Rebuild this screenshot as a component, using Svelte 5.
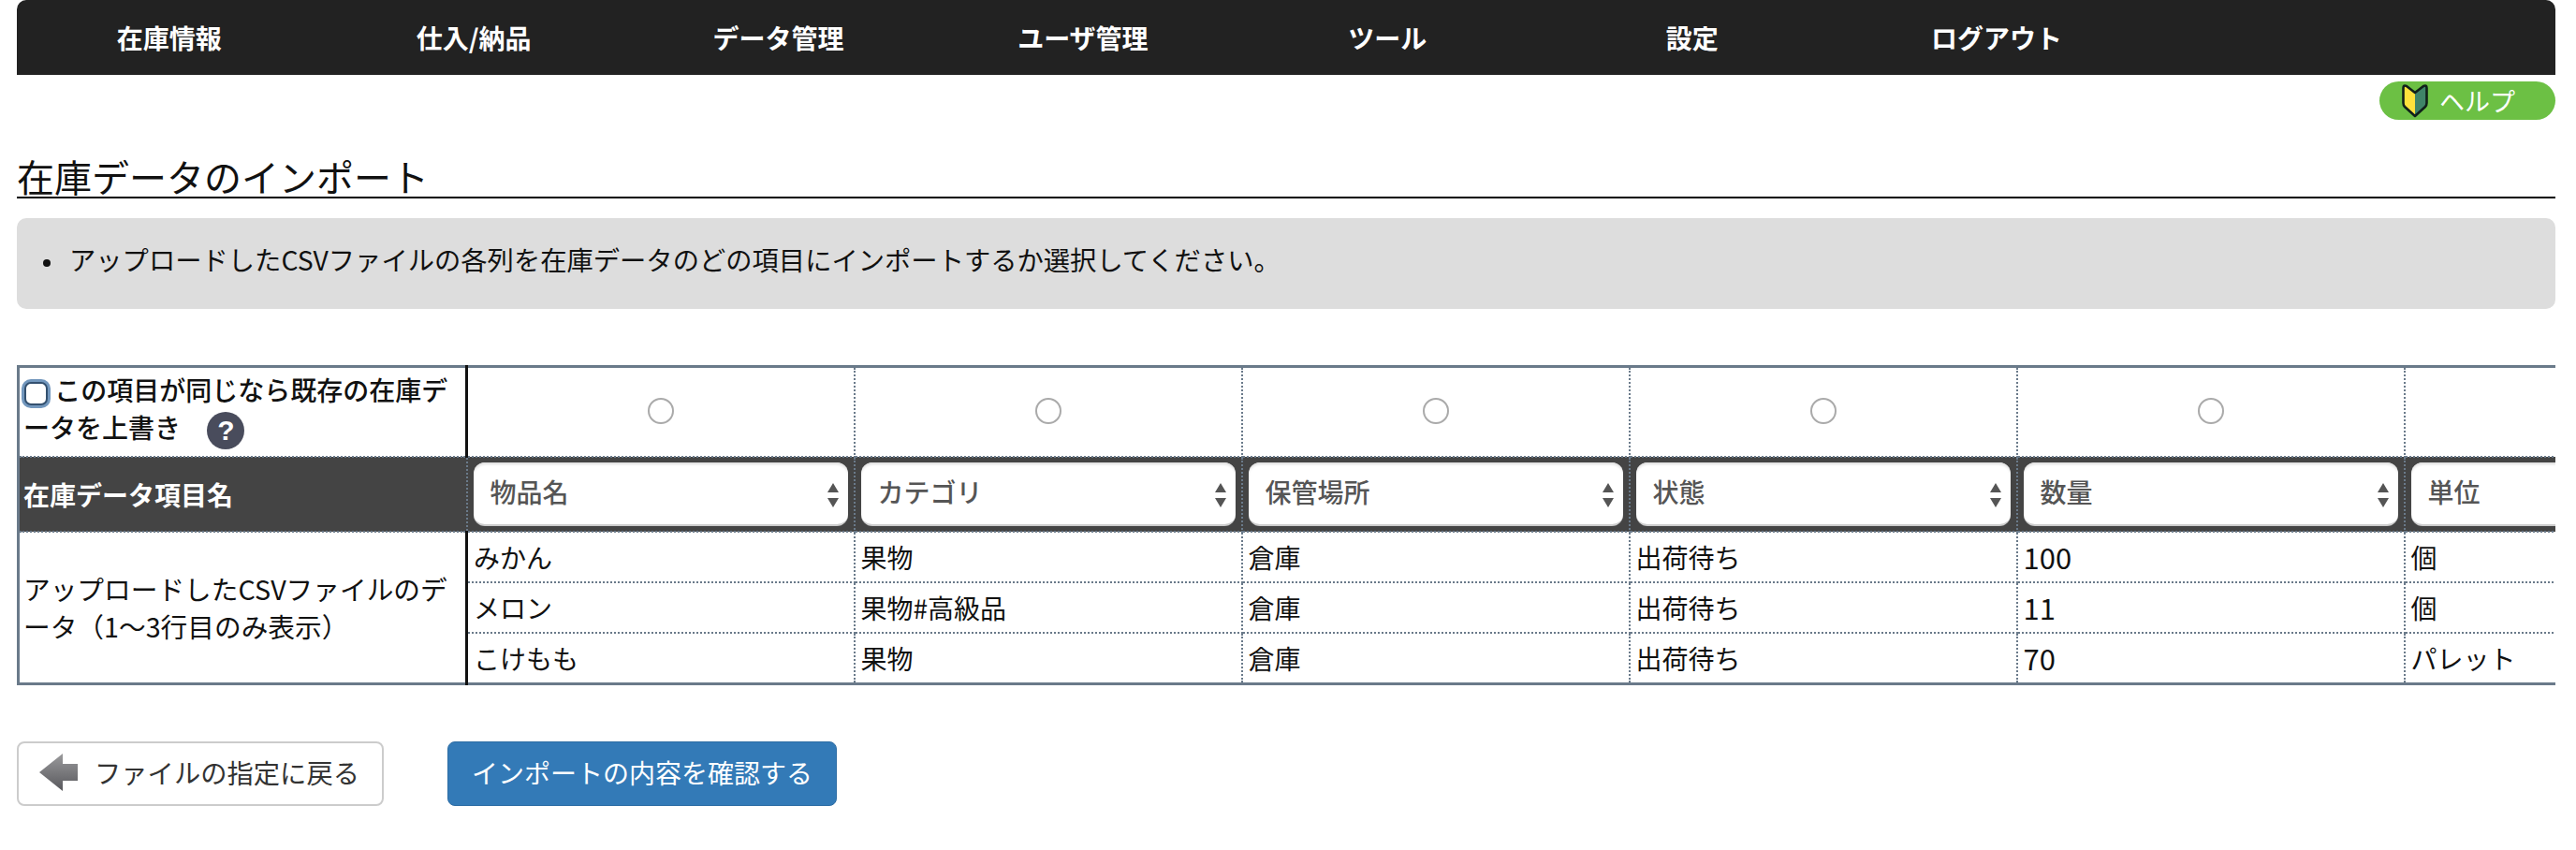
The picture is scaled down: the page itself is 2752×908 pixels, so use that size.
<script>
  const nav = ['在庫情報', '仕入/納品', 'データ管理', 'ユーザ管理', 'ツール', '設定', 'ログアウト'];
  const cols = [
    { name: '物品名', rows: ['みかん', 'メロン', 'こけもも'] },
    { name: 'カテゴリ', rows: ['果物', '果物#高級品', '果物'] },
    { name: '保管場所', rows: ['倉庫', '倉庫', '倉庫'] },
    { name: '状態', rows: ['出荷待ち', '出荷待ち', '出荷待ち'] },
    { name: '数量', rows: ['100', '11', '70'], num: true },
    { name: '単位', rows: ['個', '個', 'パレット'] }
  ];
</script>

<div class="page">
  <nav class="nav">
    {#each nav as item}
      <span class="nav-item">{item}</span>
    {/each}
  </nav>

  <div class="help-row">
    <span class="help">
      <svg class="mark" viewBox="0 0 30 37" width="30" height="37">
        <path d="M15 10 L15 35 L4 25 Q2.5 23.5 2.5 21 L2.5 5 Q2.5 1.5 6 3 Z" fill="#fde23c" />
        <path d="M15 10 L15 35 L26 25 Q27.5 23.5 27.5 21 L27.5 5 Q27.5 1.5 24 3 Z" fill="#3f8468" />
        <path d="M15 10 L6 3 Q2.5 1.5 2.5 5 L2.5 21 Q2.5 23.5 4 25 L15 35 L26 25 Q27.5 23.5 27.5 21 L27.5 5 Q27.5 1.5 24 3 Z" fill="none" stroke="#10201a" stroke-width="2.6" stroke-linejoin="round" />
      </svg>
      <span>ヘルプ</span>
    </span>
  </div>

  <h1 class="title">在庫データのインポート</h1>

  <div class="notice">
    <ul>
      <li>アップロードしたCSVファイルの各列を在庫データのどの項目にインポートするか選択してください。</li>
    </ul>
  </div>

  <div class="table-wrap">
    <table>
      <colgroup>
        <col class="col-first" />
        {#each cols as _}
          <col class="col-data" />
        {/each}
      </colgroup>
      <tbody>
        <tr class="row-key">
          <td class="first">
            <input class="check" type="checkbox" />
            この項目が同じなら既存の在庫データを上書き
            <span class="q">?</span>
          </td>
          {#each cols as c, i}
            <td class="radio-cell">
              {#if i < 5}<input class="radio" type="radio" name="key" />{/if}
            </td>
          {/each}
        </tr>
        <tr class="row-head">
          <th class="first-head">在庫データ項目名</th>
          {#each cols as c}
            <td>
              <div class="select-box">
                <select>
                  <option>{c.name}</option>
                </select>
                <svg class="updown" viewBox="0 0 14 30" width="14" height="30">
                  <path d="M7 2 L13 12 L1 12 Z M7 28 L13 18 L1 18 Z" fill="#555" />
                </svg>
              </div>
            </td>
          {/each}
        </tr>
        {#each [0, 1, 2] as r}
          <tr class="row-data">
            {#if r === 0}
              <td class="first source" rowspan="3">アップロードしたCSVファイルのデータ（1〜3行目のみ表示）</td>
            {/if}
            {#each cols as c}
              <td class:num={c.num}>{c.rows[r]}</td>
            {/each}
          </tr>
        {/each}
      </tbody>
    </table>
  </div>

  <div class="actions">
    <button class="btn back">
      <svg viewBox="0 0 41 40" width="41" height="40">
        <defs>
          <linearGradient id="arrow" x1="0" y1="0" x2="0" y2="1">
            <stop offset="0" stop-color="#9a9a9c" />
            <stop offset="1" stop-color="#58585c" />
          </linearGradient>
        </defs>
        <path d="M0 20 L25 0 L25 11 L41 11 L41 29 L25 29 L25 40 Z" fill="url(#arrow)" />
      </svg>
      <span>ファイルの指定に戻る</span>
    </button>
    <button class="btn primary">インポートの内容を確認する</button>
  </div>
</div>

<style>
  :global(body) {
    margin: 0;
    background: #fff;
  }
  .page {
    padding: 0 22px 0 18px;
    font-family: "Noto Sans CJK JP", "Noto Sans", sans-serif;
    font-size: 28px;
    color: #111;
  }
  .nav {
    display: flex;
    height: 80px;
    align-items: center;
    background: #222;
    border-radius: 10px 10px 0 0;
  }
  .nav-item {
    width: 325.4px;
    text-align: center;
    color: #fff;
    font-weight: 700;
    font-size: 28px;
    line-height: 88px;
  }
  .help-row {
    display: flex;
    justify-content: flex-end;
    padding-top: 7px;
  }
  .help {
    display: flex;
    align-items: center;
    width: 188px;
    height: 41px;
    box-sizing: border-box;
    padding-left: 23px;
    gap: 11px;
    background: #6cc044;
    border-radius: 21px;
    color: #fff;
    font-size: 27px;
    line-height: 41px;
  }
  .title {
    margin: 0;
    height: 84px;
    box-sizing: border-box;
    border-bottom: 2px solid #000;
    font-size: 40px;
    font-weight: 400;
    line-height: 40px;
    padding-top: 40px;
    color: #111;
  }
  .notice {
    margin-top: 21px;
    height: 97px;
    box-sizing: border-box;
    background: #ddd;
    border-radius: 10px;
    padding-top: 24px;
  }
  .notice ul {
    margin: 0;
    padding-left: 56px;
    list-style: none;
  }
  .notice li {
    line-height: 40px;
    font-size: 28.3px;
  }
  .notice li::before {
    content: "";
    display: inline-block;
    width: 8px;
    height: 8px;
    margin: 0 20px 0 -28px;
    vertical-align: middle;
    border-radius: 50%;
    background: #111;
  }
  .table-wrap {
    margin-top: 60px;
    overflow: hidden;
  }
  table {
    border-collapse: collapse;
    table-layout: fixed;
    width: 2549px;
    border: 3px solid #6a7a8a;
    border-right: 0;
  }
  .col-first {
    width: 479px;
  }
  .col-data {
    width: 414px;
  }
  td, th {
    border: 2px dotted #6a7a8a;
    padding: 0 6px;
    font-weight: 400;
    text-align: left;
    box-sizing: border-box;
    line-height: 40px;
  }
  td.first {
    border-right: 3px solid #111;
    padding-left: 4px;
  }
  th.first-head {
    padding-left: 4px;
  }
  td.source {
    font-size: 28.7px;
  }
  td.num {
    font-size: 31px;
  }
  .row-key {
    height: 92px;
  }
  .row-key td.first {
    font-weight: 500;
    padding-top: 3px;
    padding-bottom: 7px;
  }
  .radio-cell {
    text-align: center;
    padding-bottom: 3px;
  }
  .check {
    appearance: none;
    width: 25px;
    height: 25px;
    margin: 0 1px -5px 1px;
    background: #fff;
    border: 2px solid #33506f;
    border-radius: 7px;
    box-shadow: 0 0 0 3px #7297bd;
    box-sizing: border-box;
  }
  .q {
    display: inline-block;
    width: 40px;
    height: 40px;
    margin-left: 22px;
    vertical-align: middle;
    border-radius: 50%;
    background: #494c5c;
    color: #fff;
    font-family: "Liberation Sans", sans-serif;
    font-weight: 700;
    font-size: 30px;
    line-height: 40px;
    text-align: center;
  }
  .radio {
    appearance: none;
    display: block;
    margin: 0 auto;
    width: 28px;
    height: 28px;
    border: 2px solid #aaa;
    border-radius: 50%;
    background: #fff;
    box-sizing: border-box;
  }
  .row-head {
    height: 80px;
    background: #444;
  }
  .row-head th {
    color: #fff;
    font-weight: 700;
  }
  .select-box {
    position: relative;
    height: 68px;
  }
  select {
    appearance: none;
    display: block;
    width: 100%;
    height: 68px;
    padding: 0 0 4px 18px;
    border: 0;
    border-bottom: 2px solid #ccc;
    border-radius: 12px;
    background: #fff;
    box-shadow: inset 0 3px 3px -1px #ddd;
    color: #555;
    font-family: inherit;
    font-size: 28px;
    font-weight: 500;
  }
  .updown {
    position: absolute;
    right: 9px;
    top: 20px;
  }
  .row-data {
    height: 54px;
  }
  .actions {
    display: flex;
    gap: 68px;
    margin-top: 60px;
  }
  .btn {
    display: flex;
    align-items: center;
    height: 69px;
    box-sizing: border-box;
    font-family: inherit;
    font-size: 28px;
    border-radius: 8px;
    padding-bottom: 3px;
  }
  .back {
    width: 392px;
    padding-left: 22px;
    padding-right: 0;
    padding-top: 0;
    gap: 18px;
    background: #fff;
    border: 2px solid #ccc;
    color: #333;
  }
  .back span {
    font-size: 28.3px;
  }
  .primary {
    width: 416px;
    justify-content: center;
    padding-top: 0;
    padding-left: 0;
    padding-right: 0;
    background: #337ab7;
    border: 1px solid #2e6da4;
    color: #fff;
  }
</style>
